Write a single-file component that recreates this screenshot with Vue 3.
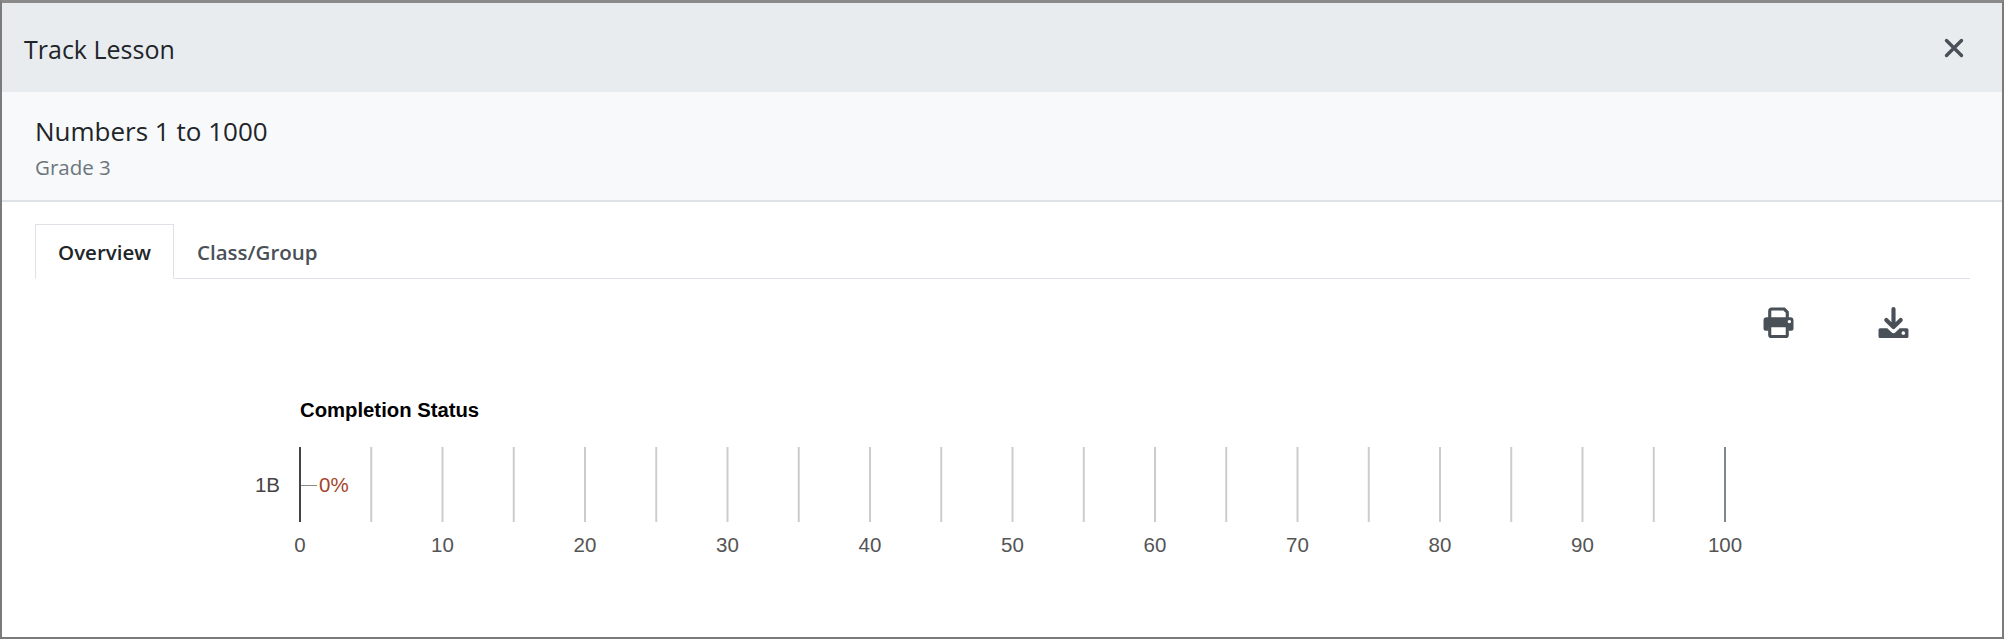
<script setup>
const x = (v) => 300 + v * 14.25
const ticks = Array.from({ length: 21 }, (_, i) => i * 5)
const labels = Array.from({ length: 11 }, (_, i) => i * 10)
</script>

<template>
  <div class="frame">
    <header class="head">
      <h1 class="title">Track Lesson</h1>
      <svg class="close" width="20" height="20" viewBox="0 0 20 20"><path d="M2.500 2.500L17.500 17.500M17.500 2.500L2.500 17.500" stroke="#495057" stroke-width="3.400" stroke-linecap="round"/></svg>
    </header>
    <section class="sub">
      <div class="lesson">Numbers 1 to 1000</div>
      <div class="grade">Grade 3</div>
    </section>
    <main class="body">
      <nav class="tabs">
        <div class="tab active">Overview</div>
        <div class="tab">Class/Group</div>
      </nav>
      <div class="tools">
        <svg width="31" height="31" viewBox="0 0 30 30">
          <path fill="none" stroke="#495057" stroke-width="3" d="M6.500 11V4a2 2 0 0 1 2-2H20.500L23.500 5V11" />
          <path fill="#495057" fill-rule="evenodd" d="M3.500 10h23a3 3 0 0 1 3 3V21a2 2 0 0 1-2 2H24.500v-4h-19v4H2.500a2 2 0 0 1-2-2V13a3 3 0 0 1 3-3zM25.500 12.500a1.600 1.600 0 1 0 .01 0z"/>
          <rect x="6.500" y="18" width="17" height="10.500" rx="1.500" fill="#fff" stroke="#495057" stroke-width="3"/>
        </svg>
        <svg width="31" height="31" viewBox="0 0 30 30">
          <path fill="none" stroke="#495057" stroke-width="4" stroke-linecap="round" stroke-linejoin="round" d="M15 2V19M8 12.500L15 19.500L22 12.500" />
          <path fill="#495057" fill-rule="evenodd" d="M2 20.500H9L13 24.500a3 3 0 0 0 4 0L21 20.500H28a1.500 1.500 0 0 1 1.500 1.500V28.500a1.500 1.500 0 0 1-1.500 1.500H2a1.500 1.500 0 0 1-1.500-1.500V22A1.500 1.500 0 0 1 2 20.500zM24.500 23.500a1.700 1.700 0 1 0 .01 0z"/>
        </svg>
      </div>
      <svg class="chart" width="1960" height="240" viewBox="0 0 1960 240">
        <g transform="translate(0,-358)">
          <text x="300" y="417" class="heading">Completion Status</text>
          <line v-for="t in ticks" :key="t" :x1="x(t)" :x2="x(t)" y1="447" y2="522"
                :stroke="t === 0 ? '#444' : t === 100 ? '#7f8790' : '#ccc'" stroke-width="2" />
          <line x1="301" x2="317" y1="485.500" y2="485.500" stroke="#8a8a8a" stroke-width="1" />
          <text x="319" y="492" class="pct">0%</text>
          <text x="280" y="492" class="cat" text-anchor="end">1B</text>
          <text v-for="l in labels" :key="l" :x="x(l)" y="552" class="axis" text-anchor="middle">{{ l }}</text>
        </g>
      </svg>
    </main>
  </div>
</template>

<style>
html, body { margin: 0; background: #fff; }
</style>

<style scoped>
.frame {
  width: 2004px;
  height: 639px;
  box-sizing: border-box;
  border: 2px solid #7b7b7b;
  border-top: 3px solid #8a8a8a;
  background: #fff;
  font-family: "Open Sans", "Noto Sans", sans-serif;
  display: flex;
  flex-direction: column;
  overflow: hidden;
}
.head {
  height: 89px;
  background: #e9ecef;
  display: flex;
  align-items: center;
  justify-content: space-between;
  padding: 0 38px 0 22px;
  flex: none;
}
.title { margin: 2px 0 0; font-size: 25px; font-weight: 400; color: #212529; }
.sub {
  height: 110px;
  flex: none;
  box-sizing: border-box;
  background: #f8f9fa;
  border-bottom: 2px solid #dee2e6;
  padding: 21px 33px 0;
}
.lesson { font-size: 26px; line-height: 36px; color: #212529; }
.grade { font-size: 20.500px; line-height: 37px; color: #6c757d; }
.body { flex: 1; padding: 22px 32px 0 33px; position: relative; }
.tabs {
  display: flex;
  height: 55px;
  box-sizing: border-box;
  border-bottom: 1px solid #dee2e6;
}
.tab {
  height: 55px;
  box-sizing: border-box;
  padding: 0 22px;
  line-height: 54px;
  font-size: 20.500px;
  font-weight: 600;
  color: #495057;
  border: 1px solid transparent;
}
.tab.active {
  color: #212529;
  background: #fff;
  border-color: #dee2e6 #dee2e6 #fff;
}
.tools {
  display: flex;
  justify-content: flex-end;
  gap: 84px;
  padding: 28px 61px 0 0;
  height: 31px;
}
.chart { position: absolute; left: -2px; top: 156px; }
.heading { font: 700 20.300px "Liberation Sans", Arial, sans-serif; fill: #000; }
.pct { font: 20.500px "Liberation Sans", Arial, sans-serif; fill: #a5452a; }
.cat { font: 20.500px "Liberation Sans", Arial, sans-serif; fill: #444; }
.axis { font: 20.500px "Liberation Sans", Arial, sans-serif; fill: #555; }
</style>
